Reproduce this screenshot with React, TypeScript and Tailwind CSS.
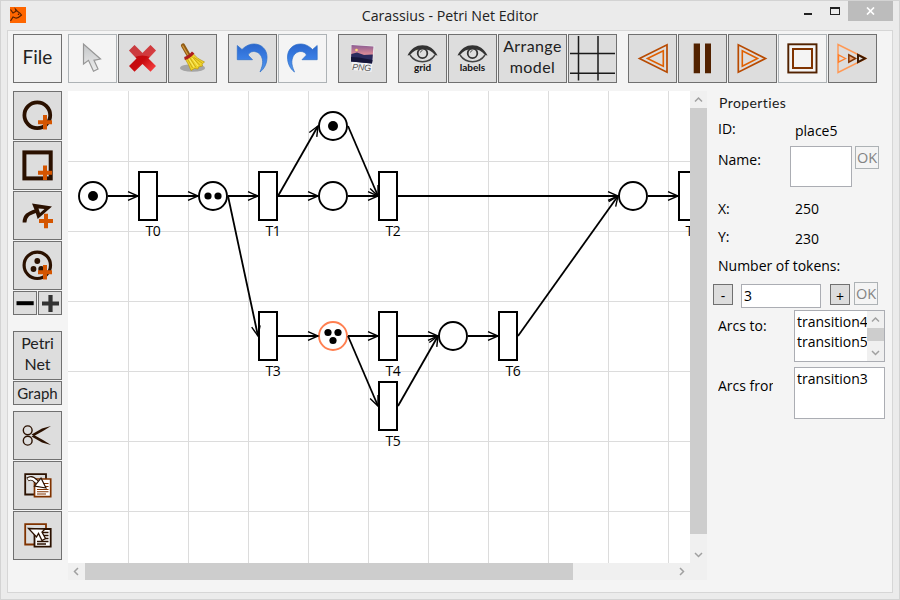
import React from "react"

interface IButton {
  children?: React.ReactNode;
  size?: string;
  disabled?: boolean;
}

interface IArc {
  from: [number, number];
  to: [number, number];
}

interface IPlace {
  id: string;
  x: number;
  y: number;
  tokens: number;
  selected?: boolean;
}

interface ITransition {
  label: string;
  x: number;
  y: number;
}

const places: IPlace[] = [
  { id: "place0", x: 93, y: 196, tokens: 1 },
  { id: "place1", x: 213, y: 196, tokens: 2 },
  { id: "place2", x: 333, y: 126, tokens: 1 },
  { id: "place3", x: 333, y: 196, tokens: 0 },
  { id: "place4", x: 633, y: 196, tokens: 0 },
  { id: "place5", x: 333, y: 336, tokens: 3, selected: true },
  { id: "place6", x: 453, y: 336, tokens: 0 },
]

const transitions: ITransition[] = [
  { label: "T0", x: 148, y: 196 },
  { label: "T1", x: 268, y: 196 },
  { label: "T2", x: 388, y: 196 },
  { label: "T3", x: 268, y: 336 },
  { label: "T4", x: 388, y: 336 },
  { label: "T5", x: 388, y: 406 },
  { label: "T6", x: 508, y: 336 },
  { label: "T7", x: 688, y: 196 },
]

const arcs: IArc[] = [
  { from: [108, 196], to: [138, 196] },
  { from: [158, 196], to: [198, 196] },
  { from: [228, 196], to: [258, 196] },
  { from: [228, 196], to: [258, 336] },
  { from: [278, 196], to: [318, 126] },
  { from: [278, 196], to: [318, 196] },
  { from: [348, 126], to: [378, 196] },
  { from: [348, 196], to: [378, 196] },
  { from: [398, 196], to: [618, 196] },
  { from: [648, 196], to: [678, 196] },
  { from: [278, 336], to: [318, 336] },
  { from: [348, 336], to: [378, 336] },
  { from: [348, 336], to: [378, 406] },
  { from: [398, 336], to: [438, 336] },
  { from: [398, 406], to: [438, 336] },
  { from: [468, 336], to: [498, 336] },
  { from: [518, 336], to: [618, 196] },
]

// token offsets from the centre of a place, by token count
const tokenOffsets: { [Key: number]: [number, number][] } = {
  0: [],
  1: [[0, 0]],
  2: [[-5, 0], [5, 0]],
  3: [[-5, -3.5], [5, -3.5], [0, 4.5]],
}

const gridX = [128, 188, 248, 308, 368, 428, 488, 548, 608, 668]
const gridY = [161, 231, 301, 371, 441, 511]

const Button: React.FC<IButton> = ({ children, size = "w-[49px] h-[49px]", disabled }) => (
  <button
    className={`${size} shrink-0 border flex items-center justify-center ${
      disabled ? "bg-[#f4f4f4] border-[#adb2b5]" : "bg-[#dddddd] border-[#707070]"
    }`}
  >
    {children}
  </button>
)

const Icon: React.FC<{ children: React.ReactNode }> = ({ children }) => (
  <svg width="47" height="47" viewBox="0 0 47 47" fill="none" className="shrink-0">{children}</svg>
)

const CrossBadge = ({ x, y }: { x: number; y: number }) => (
  <path d={`M${x - 7} ${y}h14M${x} ${y - 7.3}v14.6`} stroke="#d45500" strokeWidth="4" />
)

const UndoPath = () => (
  <path
    d="M8.3 10.5L13 14.5C17 10.5 21 9 25 9C33 9 38 15 38 22C38 29 35 34 31 37C33 32 34.6 28 33 23C31.5 18.5 28 16.5 24.5 16.5C22 16.5 20 18 19 20L23.5 24.7H8.3Z"
    fill="url(#blue)"
    stroke="#2d6fc8"
    strokeWidth="0.7"
  />
)

const Eye = ({ label }: { label: string }) => (
  <Icon>
    <path d="M8.5 20.5C12 13.5 17 10.3 23.5 10.3S35 13.5 38.5 20.5L36 20C33 16 29 14 23.5 14S14 16 11 20Z" fill="#333" />
    <path d="M11 20C14 24.5 18 26.7 23.5 26.7S33 24.5 36 20" stroke="#444" strokeWidth="1.4" />
    <circle cx="23.5" cy="18.3" r="4.8" stroke="#333" strokeWidth="1.8" />
    <path d="M21.5 17.5a2.2 2.2 0 0 1 2-2" stroke="#555" />
    <text x="23.5" y="36" textAnchor="middle" fontSize="10" fontWeight="700" fill="#111" className="font-[Lato,sans-serif]">{label}</text>
  </Icon>
)

const Toolbar = () => (
  <div className="flex pl-[5px] pt-[3px] h-[60px] font-[Lato,sans-serif] text-[#222]">
    <button className="w-[49px] h-[49px] pb-0.5 border border-[#707070] bg-[#f0f0f0] text-[19px]">File</button>
    <div className="flex gap-px ml-[6px]">
      <Button disabled>
        <Icon>
          <path d="M14.5 9V29L19.5 25.3L24.5 36.3L29 34L25 25.3L31.5 24Z" fill="url(#silver)" stroke="#969696" strokeWidth="1.2" />
        </Icon>
      </Button>
      <Button>
        <Icon>
          <path d="M15.5 10L23.5 18L31.5 10L37 15.5L29.5 23.5L37 31L31.5 36.7L23.5 29L15.5 36.7L10 31L17.5 23.5L10 15.5Z" fill="url(#red)" />
          <path d="M15.5 10L23.5 18L31.5 10L37 15.5L31 22Q23 19 16 22L10 15.5Z" fill="#fff" fillOpacity="0.2" />
        </Icon>
      </Button>
      <Button>
        <Icon>
          <ellipse cx="23.5" cy="33" rx="12.5" ry="3.8" fill="#777" fillOpacity="0.55" />
          <path d="M14 10.5L20 21" stroke="#8f5a14" strokeWidth="4.2" strokeLinecap="round" />
          <path d="M13.5 10.5L19 20" stroke="#d59a3d" strokeWidth="1.3" />
          <path d="M16 23.5L24 18.5Q28 24 35.5 27L33 29L33.5 31L29.5 32L29 34L25.5 33.5L22 35.5Q20 30 16 23.5Z" fill="#f0d52a" stroke="#b8930c" strokeWidth="0.7" />
          <path d="M18.5 24L23.5 33M21 23L27 32.5M23 21.5L31 30.5M25 22.5L33 28" stroke="#bb9510" strokeWidth="0.7" />
          <path d="M20 24L25 32M23 23L29 31" stroke="#fff38a" strokeWidth="0.7" />
          <path d="M15.5 23.5Q20 22.5 24.2 17.5" stroke="#ad1d1d" strokeWidth="3.2" />
        </Icon>
      </Button>
    </div>
    <div className="flex gap-px ml-[11px]">
      <Button><Icon><UndoPath /></Icon></Button>
      <Button disabled><Icon><g transform="matrix(-1 0 0 1 46.5 0)"><UndoPath /></g></Icon></Button>
    </div>
    <div className="flex ml-[11px]">
      <Button>
        <Icon>
          <path d="M12 9.5L35.5 11L32.5 37L13 35Z" fill="#f1f1f3" />
          <path d="M12.5 10L34.5 11.5L33 28L12 26Z" fill="url(#sunset)" />
          <path d="M12.3 19L18 17.5L25 20L33.8 19.5L33 28.5L12 26.5Z" fill="#2b2b5e" />
          <path d="M12 22L20 22.5L33.5 25L33 28.5L12 26.5Z" fill="#15153a" />
          <circle cx="17.5" cy="15" r="1.3" fill="#ffe07a" />
          <text x="13" y="35" fontSize="9" fill="#555" transform="rotate(3 13 34)" textLength="19" className="font-['Liberation_Sans',sans-serif] italic">PNG</text>
        </Icon>
      </Button>
    </div>
    <div className="flex gap-px ml-[11px]">
      <Button><Eye label="grid" /></Button>
      <Button><Eye label="labels" /></Button>
      <Button size="w-[69px] h-[49px]">
        <span className="text-[16px] leading-[21px] tracking-[0.4px] -mt-1.5">Arrange<br />model</span>
      </Button>
      <Button>
        <Icon>
          <path d="M9.5 1V45.5M29 1V45.5M1 18.5H46M1 38.2H46" stroke="#1a1a1a" strokeWidth="1.5" />
        </Icon>
      </Button>
    </div>
    <div className="flex gap-px ml-[11px]">
      <Button>
        <Icon>
          <path d="M10.5 23.5L38 9.8V37.2Z" stroke="#b84a00" strokeWidth="1.7" />
          <path d="M18.5 23.5L34.3 15.8V31.2Z" stroke="#e06000" strokeWidth="1.6" />
        </Icon>
      </Button>
      <Button>
        <Icon>
          <path d="M14.7 8.5H21V38.3H14.7ZM26 8.5H32V38.3H26Z" fill="#522200" />
        </Icon>
      </Button>
      <Button>
        <Icon>
          <path d="M36.5 23.5L9.3 9.8V37.2Z" stroke="#b84a00" strokeWidth="1.7" />
          <path d="M28.5 23.5L13.3 15.8V31.2Z" stroke="#e06000" strokeWidth="1.6" />
        </Icon>
      </Button>
      <Button disabled>
        <Icon>
          <rect x="9.3" y="9.3" width="28.2" height="28.2" stroke="#522200" strokeWidth="1.9" />
          <rect x="14" y="14" width="19" height="19" stroke="#803300" strokeWidth="2" />
        </Icon>
      </Button>
      <Button>
        <Icon>
          <path d="M37 23.5L9 9.5V37.5Z" stroke="#ff9955" strokeWidth="1.4" />
          <path d="M16.5 23.5L9.5 19.8V27.2Z" stroke="#ff7f2a" strokeWidth="1.4" />
          <path d="M26.5 23.5L19.8 19.8V27.2Z" stroke="#803300" strokeWidth="1.5" fill="#e9a67c" />
          <path d="M36 23.5L29 19.8V27.2Z" stroke="#401a00" strokeWidth="2" fill="#dddddd" />
        </Icon>
      </Button>
    </div>
  </div>
)

const Sidebar = () => (
  <div className="flex flex-col gap-px w-[49px] font-[Lato,sans-serif] text-[#222]">
    <Button>
      <Icon>
        <circle cx="23.3" cy="23.3" r="12.9" stroke="#2b1100" strokeWidth="3.8" />
        <CrossBadge x={31} y={30.3} />
      </Icon>
    </Button>
    <Button>
      <Icon>
        <rect x="10.4" y="10.4" width="26.3" height="26" stroke="#2b1100" strokeWidth="4" />
        <CrossBadge x={31} y={30.7} />
      </Icon>
    </Button>
    <Button>
      <Icon>
        <path d="M10.5 30.5C10.5 24 14 21.5 22 19" stroke="#2b1100" strokeWidth="3.8" />
        <path d="M18 11.5L38 14.5L23.7 27L21.5 20Z" fill="#2b1100" />
        <path d="M24.5 16.5L30.5 17L26 21Z" fill="#dddddd" />
        <CrossBadge x={32} y={29} />
      </Icon>
    </Button>
    <Button>
      <Icon>
        <circle cx="23.3" cy="23.3" r="13.2" stroke="#2b1100" strokeWidth="3.2" />
        <circle cx="23.3" cy="19" r="2.9" fill="#2b1100" />
        <circle cx="19.5" cy="27" r="2.9" fill="#2b1100" />
        <circle cx="27.2" cy="27" r="2.9" fill="#2b1100" />
        <CrossBadge x={31} y={30.3} />
      </Icon>
    </Button>
    <div className="flex gap-px">
      <Button size="w-6 h-6">
        <svg width="22" height="22" viewBox="0 0 22 22"><path d="M2.5 11.2H19.7" stroke="#000" strokeWidth="4" /></svg>
      </Button>
      <Button size="w-6 h-6">
        <svg width="22" height="22" viewBox="0 0 22 22"><path d="M3 11.5H20M11.5 3V20" stroke="#333" strokeWidth="4.2" /></svg>
      </Button>
    </div>
    <div className="flex flex-col gap-px mt-[15px]">
      <Button>
        <span className="text-[16px] leading-[21px] tracking-[-0.1px] -mt-1.5">Petri<br />Net</span>
      </Button>
      <Button size="w-[49px] h-6">
        <span className="text-[15px] leading-5">Graph</span>
      </Button>
    </div>
    <div className="flex flex-col gap-px mt-[5px]">
      <Button>
        <Icon>
          <circle cx="13.7" cy="18.3" r="4.4" stroke="#2b1100" strokeWidth="1.4" />
          <circle cx="13.7" cy="28.7" r="4.4" stroke="#2b1100" strokeWidth="1.4" />
          <path d="M37 14L28 16.5L17.5 22.5L20 24L29 19Z" fill="#2b1100" />
          <path d="M37 33L28 30.5L17.5 24.5L20 23L29 28Z" fill="#2b1100" />
        </Icon>
      </Button>
      <Button>
        <Icon>
          <path d="M11.2 12.2H32V32.5H11.2Z" stroke="#2b1100" strokeWidth="1.8" />
          <path d="M20.5 17H36.7V34.7H20.5Z" fill="#fff" stroke="#803300" strokeWidth="1.7" />
          <path d="M23 21.5H34.5M23 24.5H34.5M23 27.5H34.5M23 29.7H34.5M23 32H32" stroke="#803300" strokeWidth="1.1" />
          <path d="M13.5 17.5Q18 14.5 21.5 19L24 21" stroke="#2b1100" strokeWidth="4.4" />
          <path d="M14 17.3Q18 15 21.5 19L24 21" stroke="#fff" strokeWidth="2.4" />
          <path d="M27 16L32 26L20.5 24Z" fill="#fff" stroke="#2b1100" strokeWidth="1.2" />
        </Icon>
      </Button>
      <Button>
        <Icon>
          <path d="M11.2 12.2H32V32.5H11.2Z" stroke="#803300" strokeWidth="1.8" />
          <path d="M20.5 17H36.7V34.7H20.5Z" fill="#fff" stroke="#2b1100" strokeWidth="1.8" />
          <path d="M26 20.5H34.5M27 23.5H34.5M27 26.5H34.5M23 29.5H34.5M23 32H32" stroke="#2b1100" strokeWidth="1.3" />
          <path d="M14.5 16.5L31 17L28 20L31.5 26.5L28 28.5L24.5 21.5L22.5 25Z" fill="#fff" stroke="#2b1100" strokeWidth="1.3" />
        </Icon>
      </Button>
    </div>
  </div>
)

const Arc: React.FC<IArc> = ({ from, to }) => {
  const angle = Math.atan2(to[1] - from[1], to[0] - from[0]) * 180 / Math.PI
  return (
    <g stroke="#000" fill="none">
      <line x1={from[0]} y1={from[1]} x2={to[0]} y2={to[1]} strokeWidth={angle === 0 ? 2 : 1.8} />
      <path d="M-10 -4.3L0 0L-10 4.3" strokeWidth="1.4" transform={`translate(${to[0]} ${to[1]}) rotate(${angle})`} />
    </g>
  )
}

const Net = () => (
  <svg width="622" height="472" viewBox="68 91 622 472" className="block bg-white">
    <g fill="#dcdcdc">
      {gridX.map(x => <rect key={x} x={x} y="91" width="1" height="472" />)}
      {gridY.map(y => <rect key={y} x="68" y={y} width="622" height="1" />)}
    </g>
    {transitions.map(t => (
      <g key={t.label}>
        <rect x={t.x - 9} y={t.y - 24} width="18" height="48" fill="#fff" stroke="#000" strokeWidth="2" />
        <text x={t.x + 5} y={t.y + 40.4} textAnchor="middle" fontSize="14" className="font-['Open_Sans',sans-serif] tracking-[-0.3px]">{t.label}</text>
      </g>
    ))}
    {places.map(p => (
      <g key={p.id}>
        <circle cx={p.x} cy={p.y} r="14" fill="#fff" stroke={p.selected ? "#ff7f50" : "#000"} strokeWidth="1.9" />
        {tokenOffsets[p.tokens].map(([dx, dy], i) => (
          <circle key={i} cx={p.x + dx} cy={p.y + dy} r={p.tokens === 1 ? 5 : 3.6} />
        ))}
      </g>
    ))}
    {arcs.map((a, i) => <Arc key={i} {...a} />)}
  </svg>
)

const Chevron = ({ d }: { d: string }) => (
  <svg width="17" height="17" viewBox="0 0 17 17" fill="none" className="shrink-0">
    <path d={d} stroke="#a0a0a0" strokeWidth="1.5" />
  </svg>
)

const UP = "M5 10.5L8.5 7L12 10.5"
const DOWN = "M5 7L8.5 10.5L12 7"
const LEFT = "M10 5L6.5 8.5L10 12"
const RIGHT = "M7 5L10.5 8.5L7 12"

const Canvas = () => (
  <div className="w-[639px] ml-[6px]">
    <div className="flex">
      <Net />
      <div className="w-[17px] h-[472px] bg-[#f0f0f0] flex flex-col">
        <Chevron d={UP} />
        <div className="h-[426px] bg-[#cdcdcd]" />
        <div className="mt-auto"><Chevron d={DOWN} /></div>
      </div>
    </div>
    <div className="flex h-[17px] bg-[#f0f0f0] pr-[17px]">
      <Chevron d={LEFT} />
      <div className="w-[488px] bg-[#cdcdcd]" />
      <div className="ml-auto"><Chevron d={RIGHT} /></div>
    </div>
  </div>
)

const OkButton = () => (
  <button className="w-6 h-[23px] border border-[#adb2b5] bg-[#f4f4f4] text-[#838383] text-[14.5px] tracking-[-0.2px] leading-[21px]">OK</button>
)

const Properties = () => (
  <div className="w-[178px] pl-[6px] text-[14px] leading-5 text-black font-['Open_Sans',sans-serif]">
    <div className="h-[25px] pl-[6px] pt-[2px] text-[14px] tracking-[0.4px] text-[#1a1a1a] font-[Lato,sans-serif]">Properties</div>
    <div className="h-7 pl-[5px] flex pt-[3px]">
      <span className="w-[77px]">ID:</span>
      <span className="pt-[2px]">place5</span>
    </div>
    <div className="h-[53px] pl-[5px] flex pt-[2px]">
      <span className="w-[72px] pt-1">Name:</span>
      <div className="w-[62px] h-[41px] border border-[#abadb3] bg-white mr-[3px]" />
      <OkButton />
    </div>
    <div className="h-7 pl-[5px] flex pt-[2px]">
      <span className="w-[77px]">X:</span>
      <span>250</span>
    </div>
    <div className="h-[27px] pl-[5px] flex pt-[2px]">
      <span className="w-[77px]">Y:</span>
      <span className="pt-[2px]">230</span>
    </div>
    <div className="h-[29px] pl-[5px] pt-1 whitespace-nowrap">Number of tokens:</div>
    <div className="h-[29px] flex items-start pt-px">
      <button className="w-5 h-[21px] mt-[2px] border border-[#707070] bg-[#dddddd] leading-[21px]">-</button>
      <div className="w-20 h-6 mt-[2px] ml-[8px] pl-[2px] border border-[#abadb3] bg-white leading-[22px]">3</div>
      <button className="w-5 h-[21px] mt-[2px] ml-[9px] mr-1 border border-[#707070] bg-[#dddddd] leading-[23px]">+</button>
      <OkButton />
    </div>
    <div className="pl-[5px] flex">
      <span className="w-[76px] pt-[6px]">Arcs to:</span>
      <div className="w-[91px] h-[52px] border border-[#abadb3] bg-white flex shrink-0">
        <div className="w-[72px] overflow-hidden pl-[2px] pt-px whitespace-nowrap">
          <div>transition4</div>
          <div>transition5</div>
        </div>
        <div className="w-[17px] bg-[#f0f0f0] flex flex-col">
          <Chevron d={UP} />
          <div className="h-[13px] bg-[#cdcdcd]" />
          <div className="mt-auto"><Chevron d={DOWN} /></div>
        </div>
      </div>
    </div>
    <div className="pl-[5px] flex mt-[5px]">
      <span className="w-[55px] mr-[21px] pt-[9px] overflow-hidden whitespace-nowrap">Arcs from:</span>
      <div className="w-[91px] h-[52px] border border-[#abadb3] bg-white pl-[2px] pt-px shrink-0">transition3</div>
    </div>
  </div>
)

const TitleBar = () => (
  <div className="flex h-[29px] font-['Open_Sans',sans-serif]">
    <svg width="16" height="16" viewBox="0 0 16 16" fill="none" className="ml-[9px] mt-[6px]">
      <rect width="16" height="16" fill="#ff6600" />
      <path d="M0.5 2.5L3 6L6 4.2L5.5 2.2L8 4.8Q10 6 11.5 8Q8 11.5 5.5 11L3 10L0.5 14" stroke="#5a2300" strokeWidth="1.2" />
      <circle cx="8.5" cy="7.3" r="0.8" fill="#3a1500" />
    </svg>
    <div className="flex-1 text-center text-[14.2px] leading-[29px] text-[#222] pl-[77px]">Carassius - Petri Net Editor</div>
    <div className="flex w-[96px] mr-[6px]">
      <div className="w-2 h-[2px] mt-3 ml-[7px] bg-[#222]" />
      <div className="w-[10px] h-2 mt-[6px] ml-[18px] border border-t-2 border-[#222]" />
      <div className="w-[45px] h-5 ml-2 bg-[#bcbcbc] flex items-center justify-center">
        <svg width="9" height="8" viewBox="0 0 9 8"><path d="M1 0.5L8 7.5M8 0.5L1 7.5" stroke="#fff" strokeWidth="1.7" /></svg>
      </div>
    </div>
  </div>
)

const App = () => {
  return (
    <div className="w-[900px] h-[600px] bg-[#ebebeb] border border-[#d3d3d3] overflow-hidden">
      <svg width="0" height="0" className="absolute">
        <defs>
          <linearGradient id="blue" x1="0" y1="0" x2="0" y2="1">
            <stop offset="0" stopColor="#2a66cc" />
            <stop offset="0.5" stopColor="#3a7ee4" />
            <stop offset="1" stopColor="#5a9ae8" />
          </linearGradient>
          <linearGradient id="red" x1="0" y1="0" x2="1" y2="1">
            <stop offset="0" stopColor="#b80d12" />
            <stop offset="0.55" stopColor="#c80a0e" />
            <stop offset="1" stopColor="#ff4a4a" />
          </linearGradient>
          <linearGradient id="silver" x1="0" y1="0" x2="0" y2="1">
            <stop offset="0" stopColor="#c4c6c8" />
            <stop offset="1" stopColor="#ededed" />
          </linearGradient>
          <linearGradient id="sunset" x1="0" y1="0" x2="0" y2="1">
            <stop offset="0" stopColor="#8a5c92" />
            <stop offset="0.5" stopColor="#d98a98" />
            <stop offset="1" stopColor="#3a3568" />
          </linearGradient>
        </defs>
      </svg>
      <TitleBar />
      <div className="mx-[6px] h-[563px] border border-[#d6d6d6] bg-[#f4f4f4]">
        <Toolbar />
        <div className="flex pl-[5px]">
          <Sidebar />
          <Canvas />
          <Properties />
        </div>
      </div>
    </div>
  )
}

export default App
